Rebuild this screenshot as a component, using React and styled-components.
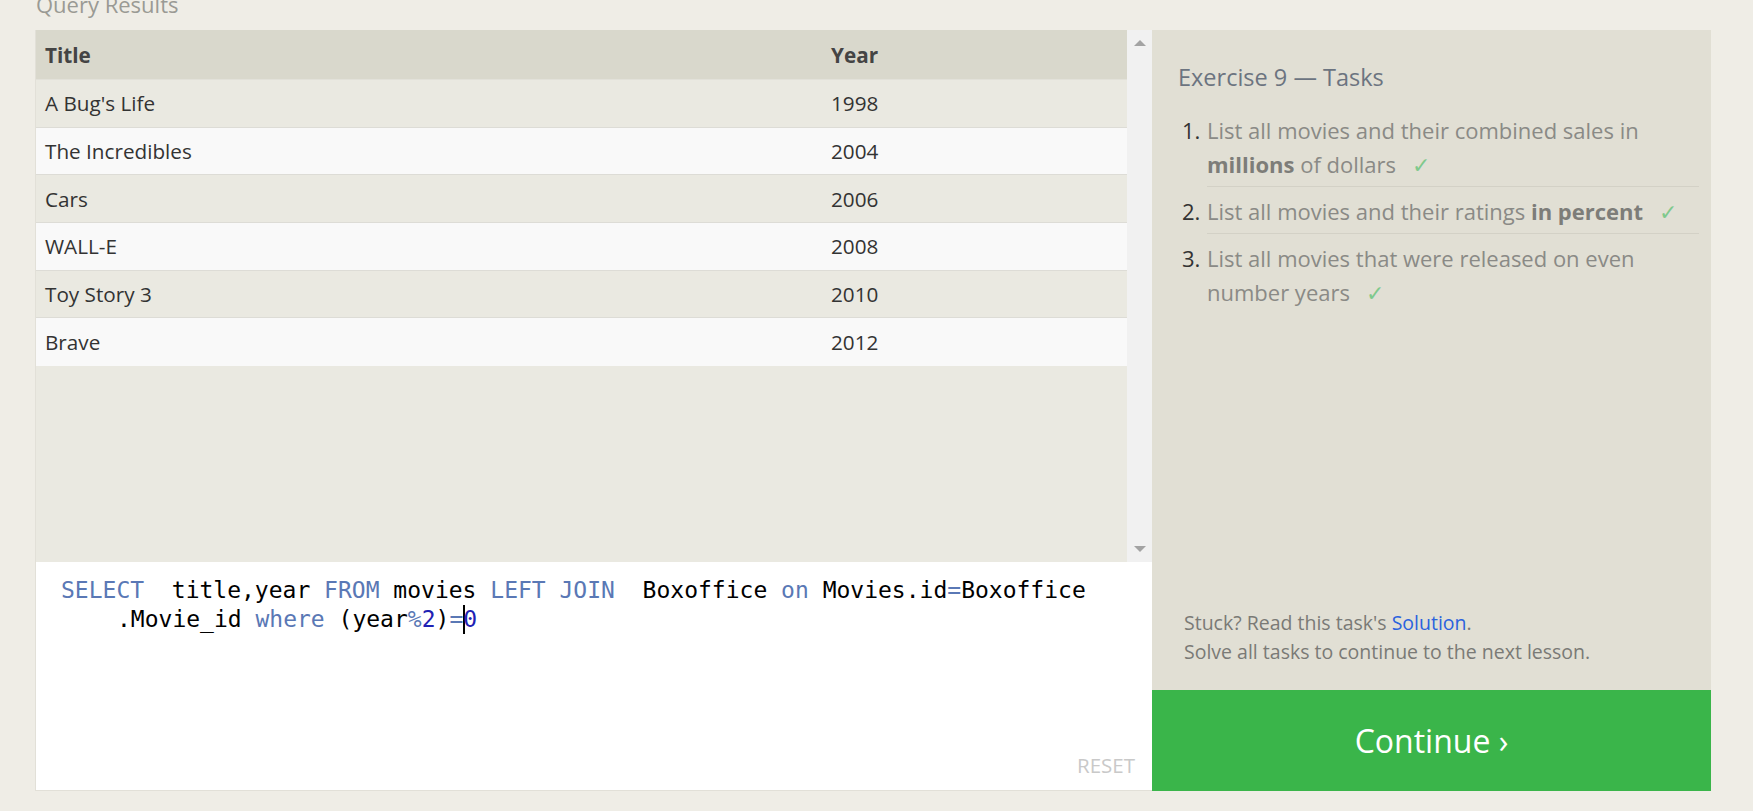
import React from "react";
import styled, { createGlobalStyle } from "styled-components";

const GlobalStyle = createGlobalStyle`
  html, body {
    margin: 0;
    padding: 0;
    background: #efede6;
    font-family: "Open Sans", "Noto Sans", sans-serif;
  }
  * { box-sizing: border-box; }
`;

const movies = [
  { title: "A Bug's Life", year: 1998 },
  { title: "The Incredibles", year: 2004 },
  { title: "Cars", year: 2006 },
  { title: "WALL-E", year: 2008 },
  { title: "Toy Story 3", year: 2010 },
  { title: "Brave", year: 2012 },
];

const App = () => {
  return (
    <Page>
      <GlobalStyle />
      <Heading>Query Results</Heading>
      <Main>
        <LeftColumn>
          <ResultsBox>
            <Table>
              <Row $head>
                <Cell>Title</Cell>
                <Cell>Year</Cell>
              </Row>
              {movies.map((m, i) => (
                <Row key={m.title} $even={i % 2 === 1}>
                  <Cell>{m.title}</Cell>
                  <Cell>{m.year}</Cell>
                </Row>
              ))}
            </Table>
            <Scrollbar>
              <Arrow $up />
              <Arrow />
            </Scrollbar>
          </ResultsBox>
          <Editor>
            <CodeLine>
              <Kw>SELECT</Kw>{"  title,year "}<Kw>FROM</Kw>{" movies "}
              <Kw>LEFT JOIN</Kw>{"  Boxoffice "}<Kw>on</Kw>{" Movies.id"}
              <Kw>=</Kw>Boxoffice
            </CodeLine>
            <CodeLine $wrapped>
              {".Movie_id "}<Kw>where</Kw>{" (year"}<Kw>%</Kw>
              <Num>2</Num>){""}<Kw>=</Kw>
              <Cursor />
              <Num>0</Num>
            </CodeLine>
            <Reset>RESET</Reset>
          </Editor>
        </LeftColumn>
        <RightColumn>
          <TasksPanel>
            <TasksTitle>Exercise 9 — Tasks</TasksTitle>
            <TaskList>
              <Task>
                <TaskNum>1.</TaskNum>
                <TaskText>
                  List all movies and their combined sales in{" "}
                  <b>millions</b> of dollars <Check>✓</Check>
                </TaskText>
              </Task>
              <Task>
                <TaskNum>2.</TaskNum>
                <TaskText>
                  List all movies and their ratings <b>in percent</b>{" "}
                  <Check>✓</Check>
                </TaskText>
              </Task>
              <Task>
                <TaskNum>3.</TaskNum>
                <TaskText>
                  List all movies that were released on even number years{" "}
                  <Check>✓</Check>
                </TaskText>
              </Task>
            </TaskList>
            <Hint>
              Stuck? Read this task's <SolutionLink>Solution</SolutionLink>.
              <br />
              Solve all tasks to continue to the next lesson.
            </Hint>
          </TasksPanel>
          <ContinueButton>Continue ›</ContinueButton>
        </RightColumn>
      </Main>
    </Page>
  );
};

const Page = styled.div`
  width: 1753px;
  height: 811px;
  padding-left: 35px;
  overflow: hidden;
`;

const Heading = styled.h3`
  margin: -6px 0 16px 1px;
  font-size: 22px;
  line-height: 20px;
  font-weight: 400;
  color: #9a9a94;
`;

const Main = styled.div`
  display: flex;
  width: 1676px;
  height: 761px;
`;

const LeftColumn = styled.div`
  width: 1117px;
  display: flex;
  flex-direction: column;
  border-left: 1px solid #e2e0d8;
  border-bottom: 1px solid #e2e0d8;
`;

const ResultsBox = styled.div`
  height: 532px;
  display: flex;
  background: #eae9e1;
`;

const Table = styled.div`
  flex: 1;
  display: flex;
  flex-direction: column;
`;

const Row = styled.div`
  display: grid;
  grid-template-columns: 786px 1fr;
  align-items: center;
  height: ${(p) => (p.$head ? "50px" : "47.67px")};
  background: ${(p) => (p.$head ? "#d9d8cc" : p.$even ? "#f9f9f9" : "#eae9e1")};
  border-bottom: 1px solid ${(p) => (p.$head ? "#e2e1d9" : "#dddcd6")};
  font-size: 20.7px;
  font-weight: ${(p) => (p.$head ? 700 : 400)};
  color: ${(p) => (p.$head ? "#444" : "#333")};
  &:last-child {
    border-bottom: none;
  }
`;

const Cell = styled.div`
  padding-left: 9px;
  white-space: nowrap;
`;

const Scrollbar = styled.div`
  width: 25px;
  background: #f1f1f1;
  display: flex;
  flex-direction: column;
  justify-content: space-between;
  align-items: center;
  padding: 10px 0 10px;
`;

const Arrow = styled.div`
  width: 0;
  height: 0;
  border-left: 6px solid transparent;
  border-right: 6px solid transparent;
  ${(p) =>
    p.$up
      ? "border-bottom: 6px solid #a3a3a3;"
      : "border-top: 6px solid #a3a3a3;"}
`;

const Editor = styled.div`
  flex: 1;
  background: #fff;
  padding: 14px 17px 12px 25px;
  display: flex;
  flex-direction: column;
  font-family: "DejaVu Sans Mono", monospace;
  font-size: 23px;
  line-height: 29px;
  color: #000;
`;

const CodeLine = styled.div`
  white-space: pre;
  padding-left: ${(p) => (p.$wrapped ? "56px" : "0")};
`;

const Kw = styled.span`
  color: #5a78b5;
`;

const Num = styled.span`
  color: #1e22b4;
`;

const Cursor = styled.span`
  display: inline-block;
  width: 2px;
  height: 29px;
  margin-right: -2px;
  vertical-align: top;
  background: #000;
`;

const Reset = styled.div`
  margin-top: auto;
  align-self: flex-end;
  font-family: "Open Sans", sans-serif;
  font-size: 20.5px;
  line-height: 26px;
  color: #c9c9c9;
`;

const RightColumn = styled.div`
  width: 559px;
  display: flex;
  flex-direction: column;
`;

const TasksPanel = styled.div`
  flex: 1;
  background: #e1dfd4;
  padding: 33px 12px 24px 26px;
  display: flex;
  flex-direction: column;
`;

const TasksTitle = styled.h2`
  margin: 0 0 15px;
  font-size: 23.5px;
  line-height: 28px;
  font-weight: 400;
  color: #6c7480;
`;

const TaskList = styled.ol`
  list-style: none;
  margin: 0;
  padding: 0;
`;

const Task = styled.li`
  display: flex;
  font-size: 22px;
  line-height: 34px;
  color: #8a8a86;
`;

const TaskNum = styled.span`
  width: 29px;
  flex-shrink: 0;
  padding: 7px 0 5px 4px;
  color: #333;
`;

const TaskText = styled.div`
  flex: 1;
  padding: 7px 0 5px;
  border-bottom: 1px solid #d3d1c6;
  ${Task}:last-child & {
    border-bottom: none;
  }
  b {
    color: #7d7d79;
    font-weight: 700;
  }
`;

const Check = styled.span`
  margin-left: 10px;
  color: #7fc98c;
`;

const Hint = styled.p`
  margin: auto 0 0 6px;
  font-size: 19.5px;
  line-height: 29px;
  color: #7a7a76;
`;

const SolutionLink = styled.a`
  color: #2b62de;
  text-decoration: none;
`;

const ContinueButton = styled.button`
  height: 101px;
  border: none;
  background: #3ab54a;
  color: #fff;
  font-family: "Open Sans", sans-serif;
  font-size: 32px;
  cursor: pointer;
`;

export default App;
